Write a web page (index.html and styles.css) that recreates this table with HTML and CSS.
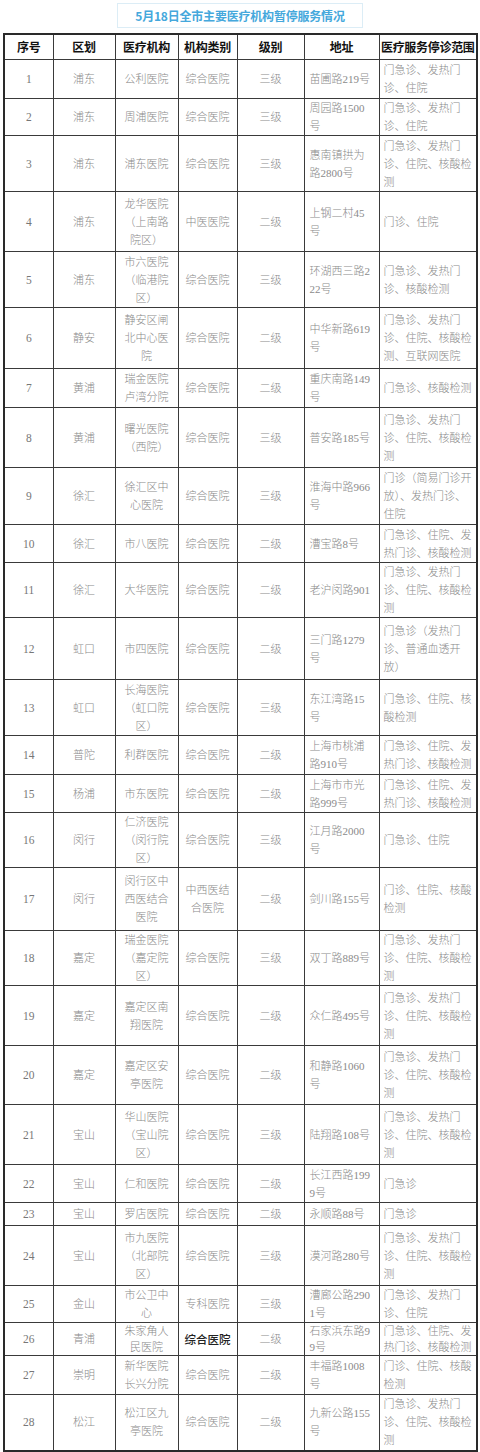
FILE: index.html
```html
<!DOCTYPE html>
<html lang="zh-CN">
<head>
<meta charset="utf-8">
<title>5月18日全市主要医疗机构暂停服务情况</title>
<link rel="stylesheet" href="styles.css">
</head>
<body>
<div class="page">
  <div class="title">5月18日全市主要医疗机构暂停服务情况</div>
  <table class="grid">
    <colgroup>
      <col class="c1"><col class="c2"><col class="c3"><col class="c4"><col class="c5"><col class="c6"><col class="c7">
    </colgroup>
    <thead>
      <tr><th>序号</th><th>区划</th><th>医疗机构</th><th>机构类别</th><th>级别</th><th>地址</th><th>医疗服务停诊范围</th></tr>
    </thead>
    <tbody>
      <tr><td class="n">1</td><td>浦东</td><td>公利医院</td><td>综合医院</td><td>三级</td><td class="l">苗圃路219号</td><td class="l">门急诊、发热门<br>诊、住院</td></tr>
      <tr><td class="n">2</td><td>浦东</td><td>周浦医院</td><td>综合医院</td><td>三级</td><td class="l">周园路1500<br>号</td><td class="l">门急诊、发热门<br>诊、住院</td></tr>
      <tr><td class="n">3</td><td>浦东</td><td>浦东医院</td><td>综合医院</td><td>三级</td><td class="l">惠南镇拱为<br>路2800号</td><td class="l">门急诊、发热门<br>诊、住院、核酸检<br>测</td></tr>
      <tr><td class="n">4</td><td>浦东</td><td>龙华医院<br>（上南路<br>院区）</td><td>中医医院</td><td>二级</td><td class="l">上钢二村45<br>号</td><td class="l">门诊、住院</td></tr>
      <tr><td class="n">5</td><td>浦东</td><td>市六医院<br>（临港院<br>区）</td><td>综合医院</td><td>三级</td><td class="l">环湖西三路2<br>22号</td><td class="l">门急诊、发热门<br>诊、核酸检测</td></tr>
      <tr><td class="n">6</td><td>静安</td><td>静安区闸<br>北中心医<br>院</td><td>综合医院</td><td>二级</td><td class="l">中华新路619<br>号</td><td class="l">门急诊、发热门<br>诊、住院、核酸检<br>测、互联网医院</td></tr>
      <tr><td class="n">7</td><td>黄浦</td><td>瑞金医院<br>卢湾分院</td><td>综合医院</td><td>二级</td><td class="l">重庆南路149<br>号</td><td class="l">门急诊、核酸检测</td></tr>
      <tr><td class="n">8</td><td>黄浦</td><td>曙光医院<br>（西院）</td><td>综合医院</td><td>三级</td><td class="l">普安路185号</td><td class="l">门急诊、发热门<br>诊、住院、核酸检<br>测</td></tr>
      <tr><td class="n">9</td><td>徐汇</td><td>徐汇区中<br>心医院</td><td>综合医院</td><td>三级</td><td class="l">淮海中路966<br>号</td><td class="l">门诊（简易门诊开<br>放）、发热门诊、<br>住院</td></tr>
      <tr><td class="n">10</td><td>徐汇</td><td>市八医院</td><td>综合医院</td><td>二级</td><td class="l">漕宝路8号</td><td class="l">门急诊、住院、发<br>热门诊、核酸检测</td></tr>
      <tr><td class="n">11</td><td>徐汇</td><td>大华医院</td><td>综合医院</td><td>二级</td><td class="l">老沪闵路901</td><td class="l">门急诊、发热门<br>诊、住院、核酸检<br>测</td></tr>
      <tr><td class="n">12</td><td>虹口</td><td>市四医院</td><td>综合医院</td><td>二级</td><td class="l">三门路1279<br>号</td><td class="l">门急诊（发热门<br>诊、普通血透开<br>放）</td></tr>
      <tr><td class="n">13</td><td>虹口</td><td>长海医院<br>（虹口院<br>区）</td><td>综合医院</td><td>三级</td><td class="l">东江湾路15<br>号</td><td class="l">门急诊、住院、核<br>酸检测</td></tr>
      <tr><td class="n">14</td><td>普陀</td><td>利群医院</td><td>综合医院</td><td>二级</td><td class="l">上海市桃浦<br>路910号</td><td class="l">门急诊、住院、发<br>热门诊、核酸检测</td></tr>
      <tr><td class="n">15</td><td>杨浦</td><td>市东医院</td><td>综合医院</td><td>二级</td><td class="l">上海市市光<br>路999号</td><td class="l">门急诊、住院、发<br>热门诊、核酸检测</td></tr>
      <tr><td class="n">16</td><td>闵行</td><td>仁济医院<br>（闵行院<br>区）</td><td>综合医院</td><td>三级</td><td class="l">江月路2000<br>号</td><td class="l">门急诊、住院</td></tr>
      <tr><td class="n">17</td><td>闵行</td><td>闵行区中<br>西医结合<br>医院</td><td>中西医结<br>合医院</td><td>二级</td><td class="l">剑川路155号</td><td class="l">门诊、住院、核酸<br>检测</td></tr>
      <tr><td class="n">18</td><td>嘉定</td><td>瑞金医院<br>（嘉定院<br>区）</td><td>综合医院</td><td>三级</td><td class="l">双丁路889号</td><td class="l">门急诊、发热门<br>诊、住院、核酸检<br>测</td></tr>
      <tr><td class="n">19</td><td>嘉定</td><td>嘉定区南<br>翔医院</td><td>综合医院</td><td>二级</td><td class="l">众仁路495号</td><td class="l">门急诊、发热门<br>诊、住院、核酸检<br>测</td></tr>
      <tr><td class="n">20</td><td>嘉定</td><td>嘉定区安<br>亭医院</td><td>综合医院</td><td>二级</td><td class="l">和静路1060<br>号</td><td class="l">门急诊、发热门<br>诊、住院、核酸检<br>测</td></tr>
      <tr><td class="n">21</td><td>宝山</td><td>华山医院<br>（宝山院<br>区）</td><td>综合医院</td><td>三级</td><td class="l">陆翔路108号</td><td class="l">门急诊、发热门<br>诊、住院、核酸检<br>测</td></tr>
      <tr><td class="n">22</td><td>宝山</td><td>仁和医院</td><td>综合医院</td><td>二级</td><td class="l">长江西路199<br>9号</td><td class="l">门急诊</td></tr>
      <tr><td class="n">23</td><td>宝山</td><td>罗店医院</td><td>综合医院</td><td>二级</td><td class="l">永顺路88号</td><td class="l">门急诊</td></tr>
      <tr><td class="n">24</td><td>宝山</td><td>市九医院<br>（北部院<br>区）</td><td>综合医院</td><td>三级</td><td class="l">漠河路280号</td><td class="l">门急诊、发热门<br>诊、住院、核酸检<br>测</td></tr>
      <tr><td class="n">25</td><td>金山</td><td>市公卫中<br>心</td><td>专科医院</td><td>三级</td><td class="l">漕廊公路290<br>1号</td><td class="l">门急诊、发热门<br>诊、住院</td></tr>
      <tr class="tight"><td class="n">26</td><td>青浦</td><td>朱家角人<br>民医院</td><td class="strong">综合医院</td><td>二级</td><td class="l">石家浜东路9<br>9号</td><td class="l">门急诊、住院、发<br>热门诊、核酸检测</td></tr>
      <tr><td class="n">27</td><td>崇明</td><td>新华医院<br>长兴分院</td><td>综合医院</td><td>二级</td><td class="l">丰福路1008<br>号</td><td class="l">门诊、住院、核酸<br>检测</td></tr>
      <tr><td class="n">28</td><td>松江</td><td>松江区九<br>亭医院</td><td>综合医院</td><td>二级</td><td class="l">九新公路155<br>号</td><td class="l">门急诊、发热门<br>诊、住院、核酸检<br>测</td></tr>
    </tbody>
  </table>
</div>
</body>
</html>
```
FILE: styles.css
```css
html, body {
  margin: 0;
  padding: 0;
  background: #ffffff;
}

.page {
  padding: 3px 0 0 3px;
  width: 473px;
  font-family: "Liberation Serif", "Noto Sans CJK SC", serif;
}

.title {
  box-sizing: border-box;
  width: 246px;
  height: 25px;
  margin: 0 0 5px 114px;
  border: 1px solid #dcedf6;
  display: flex;
  align-items: center;
  justify-content: center;
  font-family: "Noto Sans CJK SC", sans-serif;
  font-weight: 700;
  font-size: 12px;
  color: #45a8dc;
  letter-spacing: -0.2px;
}

.grid {
  width: 473px;
  border-collapse: collapse;
  table-layout: fixed;
  border: 2px solid #2a2a2a;
}

.c1 { width: 49px; }
.c2 { width: 62px; }
.c3 { width: 63px; }
.c4 { width: 59px; }
.c5 { width: 67px; }
.c6 { width: 75px; }
.c7 { width: 98px; }

.grid th,
.grid td {
  border: 1px solid #3a3a3a;
  padding: 0;
  vertical-align: middle;
  text-align: center;
}

.grid th {
  height: 24px;
  font-family: "Noto Sans CJK SC", sans-serif;
  font-weight: 700;
  font-size: 12px;
  color: #111111;
  letter-spacing: -0.3px;
  line-height: 14px;
}

.grid td {
  font-family: "Liberation Serif", "Noto Sans CJK SC", serif;
  font-weight: 300;
  font-size: 11px;
  line-height: 18px;
  color: #8a8a8a;
}

.grid td.n {
  font-size: 11.5px;
  color: #777777;
}

.grid td.l {
  text-align: left;
  padding-left: 5px;
}

.grid td:last-child.l {
  padding-left: 4px;
}

.grid td.strong {
  font-family: "Noto Sans CJK SC", sans-serif;
  font-weight: 500;
  font-size: 11.5px;
  color: #222222;
}

.grid tr.tight td {
  line-height: 16px;
}

tbody tr:nth-child(1)  { height: 39px; }
tbody tr:nth-child(2)  { height: 37px; }
tbody tr:nth-child(3)  { height: 56px; }
tbody tr:nth-child(4)  { height: 60px; }
tbody tr:nth-child(5)  { height: 56px; }
tbody tr:nth-child(6)  { height: 61px; }
tbody tr:nth-child(7)  { height: 39px; }
tbody tr:nth-child(8)  { height: 60px; }
tbody tr:nth-child(9)  { height: 57px; }
tbody tr:nth-child(10) { height: 38px; }
tbody tr:nth-child(11) { height: 55px; }
tbody tr:nth-child(12) { height: 62px; }
tbody tr:nth-child(13) { height: 56px; }
tbody tr:nth-child(14) { height: 39px; }
tbody tr:nth-child(15) { height: 38px; }
tbody tr:nth-child(16) { height: 55px; }
tbody tr:nth-child(17) { height: 63px; }
tbody tr:nth-child(18) { height: 55px; }
tbody tr:nth-child(19) { height: 60px; }
tbody tr:nth-child(20) { height: 59px; }
tbody tr:nth-child(21) { height: 60px; }
tbody tr:nth-child(22) { height: 38px; }
tbody tr:nth-child(23) { height: 23px; }
tbody tr:nth-child(24) { height: 60px; }
tbody tr:nth-child(25) { height: 37px; }
tbody tr:nth-child(26) { height: 33px; }
tbody tr:nth-child(27) { height: 39px; }
tbody tr:nth-child(28) { height: 56px; }
```
